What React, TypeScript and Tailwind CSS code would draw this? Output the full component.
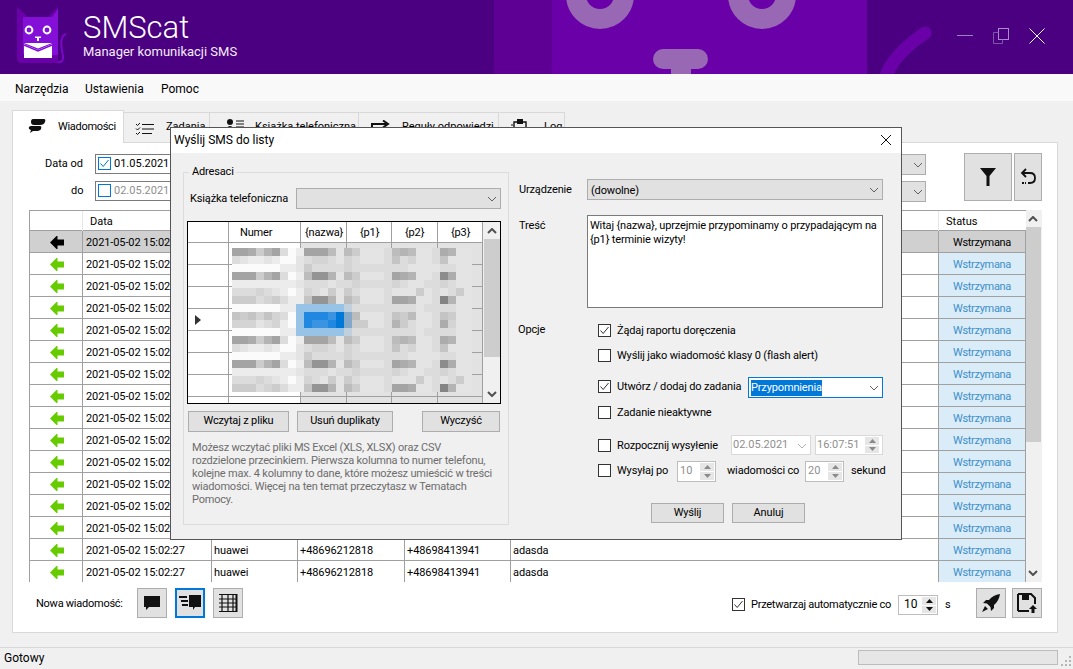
import React from "react";

const T = ({ c, children }: { c: string; children: React.ReactNode }) => (
  <div className={"absolute h-[16px] leading-[16px] whitespace-nowrap " + c}>{children}</div>
);

const Chevron = ({ c = "", color = "#606060" }: { c?: string; color?: string }) => (
  <svg viewBox="0 0 10 6" className={"absolute w-[10px] h-[6px] " + c}>
    <path d="M1 1 L5 5 L9 1" fill="none" stroke={color} strokeWidth="1" />
  </svg>
);
const ChevronBold = ({ c = "", up = false }: { c?: string; up?: boolean }) => (
  <svg viewBox="0 0 10 6" className={"absolute w-[10px] h-[6px] " + c}>
    <path d={up ? "M1 5 L5 1 L9 5" : "M1 1 L5 5 L9 1"} fill="none" stroke="#505050" strokeWidth="2" />
  </svg>
);

const Check = ({ c, on = false, blue = false }: { c: string; on?: boolean; blue?: boolean }) => (
  <div className={"absolute w-[13px] h-[13px] border bg-white " + (blue ? "border-[#0078d7] " : "border-[#333333] ") + c}>
    {on && (
      <svg viewBox="0 0 11 11" className="absolute left-0 top-0 w-[11px] h-[11px]">
        <path d="M1.5 5.5 L4.2 8.5 L9.5 2" fill="none" stroke={blue ? "#0078d7" : "#333333"} strokeWidth="1" />
      </svg>
    )}
  </div>
);

const Spin = ({ c, dark = false }: { c: string; dark?: boolean }) => (
  <div className={"absolute w-[14px] flex flex-col gap-[1px] " + c}>
    <div className="flex-1 bg-[#e6e6e6] flex items-center justify-center">
      <svg viewBox="0 0 7 4" className="w-[7px] h-[4px]"><path d="M0 4 L3.5 0 L7 4Z" fill={dark ? "#111111" : "#8a8a8a"} /></svg>
    </div>
    <div className="flex-1 bg-[#e6e6e6] flex items-center justify-center">
      <svg viewBox="0 0 7 4" className="w-[7px] h-[4px]"><path d="M0 0 L3.5 4 L7 0Z" fill={dark ? "#111111" : "#8a8a8a"} /></svg>
    </div>
  </div>
);

const Btn = ({ c, children }: { c: string; children?: React.ReactNode }) => (
  <div className={"absolute bg-[#e1e1e1] border border-[#adadad] flex items-center justify-center text-black " + c}>{children}</div>
);

const Arrow = ({ color }: { color: string }) => (
  <svg viewBox="0 0 14 13" className="w-[14px] h-[13px]">
    <path d="M0 6.5 L6.5 0 L7.5 0 L7.5 3.5 L14 3.5 L14 9.5 L7.5 9.5 L7.5 13 L6.5 13 Z" fill={color} />
  </svg>
);

const Logo = () => (
  <svg viewBox="0 0 70 70" className="absolute left-0 top-0 w-[70px] h-[70px]">
    <path d="M17 7 L28 17 L48 17 L58 7 L58 63 L22 63 Q17 63 17 58 Z" fill="#6a00a8" />
    <path d="M23 17 L52 17 L58 9 L58 55 L26 55 Q23 55 23 52 Z" fill="#8410d8" />
    <path d="M58 62 Q64 63 63 56 C62 50 60 44 62 38 Q63 35 66 34" fill="none" stroke="#7a08c4" strokeWidth="2" />
    <circle cx="29" cy="30" r="3.4" fill="none" stroke="#ffffff" strokeWidth="2" />
    <circle cx="47" cy="30" r="3.4" fill="none" stroke="#ffffff" strokeWidth="2" />
    <path d="M35 36.5 H41 V38 H39 V41 H37 V38 H35 Z" fill="#ffffff" />
    <path d="M24 44 L38 50 L52 44 V58 H24 Z" fill="#ffffff" />
    <path d="M24 43 H52 L38 48.5 Z" fill="#ffffff" />
    <path d="M24 45 L38 51 L52 45" fill="none" stroke="#8410d8" strokeWidth="1.5" />
  </svg>
);

const Bubble = ({ c }: { c: string }) => (
  <svg viewBox="0 0 18 18" className={"w-[18px] h-[18px] " + c}>
    <path d="M1 2 H17 V13 H6 L3 16 V13 H1 Z" fill="#111111" />
  </svg>
);

/* ---------- blurred contact mosaic ---------- */
const MOSAIC = [
  "556a75cfe5558d8adddc878ddc67dd",
  "cdeedeffdcbbcdbcdddc9cbddc9ddd",
  "ffffffeedaccccbcccccccddddccdd",
  "555a75cfe8337d8adddc567ddc26dd",
  "eeeeeeeedcccdccbccccbcddccbcdd",
  "cccbcdefebcdadacdddcdddadcdcad",
  "aaacbacee9337d8adddc556ddc17dd",
  "ffffffeeLLLLLLMccccccccdccccdd",
  "9a9b9bcfLTTTSUV8dddc9a8ddc9add",
  "bbbdcbefLTSSTUVaaddc7acddc6bdd",
  "ffffffeeLLLLLLMccccccccdccccdd",
];
const SPECIAL: Record<string, string> = {
  L: "#97c3e6",
  M: "#c0d0dc",
  S: "#3a94e2",
  T: "#2088e0",
  U: "#0078d7",
  V: "#84a8c8",
};
const cellColor = (ch: string) => {
  if (SPECIAL[ch]) return SPECIAL[ch];
  if (ch === "f") return "#fbfbfb";
  const g = 0x7c + 8 * parseInt(ch, 16);
  return `rgb(${g},${g},${g})`;
};
const Mosaic = () => {
  const rects: React.ReactNode[] = [];
  for (let r = 0; r < 18; r++) {
    const row = MOSAIC[r % 11];
    for (let i = 0; i < 30; i++) {
      rects.push(<rect key={r + "-" + i} x={i * 8} y={r * 8} width="8" height="8" fill={cellColor(row[i])} />);
    }
  }
  return (
    <svg viewBox="0 0 240 144" shapeRendering="crispEdges" className="absolute left-[232px] top-[248px] w-[240px] h-[144px]">
      {rects}
    </svg>
  );
};

const Dialog = () => {
  const hLines = ["top-[242px]", "top-[264px]", "top-[286px]", "top-[308px]", "top-[330px]", "top-[352px]", "top-[374px]", "top-[396px]"];
  const vLines = ["left-[228px]", "left-[300px]", "left-[346px]", "left-[391px]", "left-[437px]", "left-[482px]"];
  return (
    <div className="text-[11px] tracking-[-0.15px]">
      <div className="absolute left-[170px] top-[127px] w-[732px] h-[413px] bg-[#f0f0f0] border border-[#555555]" />
      <div className="absolute left-[171px] top-[128px] w-[730px] h-[25px] bg-white" />
      <T c="left-[174px] top-[132px] text-[12px] tracking-[0px]">Wyślij SMS do listy</T>
      <svg viewBox="0 0 12 12" className="absolute left-[880px] top-[134px] w-[12px] h-[12px]">
        <path d="M1 1 L11 11 M11 1 L1 11" stroke="#111111" strokeWidth="1" />
      </svg>

      {/* Adresaci */}
      <div className="absolute left-[183px] top-[172px] w-[326px] h-[353px] border border-[#dcdcdc]" />
      <div className="absolute left-[189px] top-[165px] w-[47px] h-[14px] bg-[#f0f0f0]" />
      <T c="left-[192px] top-[164px]">Adresaci</T>
      <T c="left-[190px] top-[191px]">Książka telefoniczna</T>
      <div className="absolute left-[296px] top-[188px] w-[205px] h-[21px] bg-[#e1e1e1] border border-[#adadad]" />
      <Chevron c="left-[487px] top-[196px]" />

      {/* contact grid */}
      <div className="absolute left-[187px] top-[221px] w-[314px] h-[183px] bg-white border border-black overflow-hidden" />
      <div className="absolute left-[301px] top-[243px] w-[181px] h-[160px] bg-[#e2e2e2]" />
      {hLines.map((h) => (
        <div key={h} className={"absolute left-[188px] w-[294px] h-[1px] bg-[#a0a0a0] " + h} />
      ))}
      {vLines.map((v) => (
        <div key={v} className={"absolute top-[222px] w-[1px] h-[181px] bg-[#a0a0a0] " + v} />
      ))}
      <Mosaic />
      <T c="left-[240px] top-[225px]">Numer</T>
      <T c="left-[305px] top-[225px]">{"{nazwa}"}</T>
      <T c="left-[360px] top-[225px]">{"{p1}"}</T>
      <T c="left-[405px] top-[225px]">{"{p2}"}</T>
      <T c="left-[451px] top-[225px]">{"{p3}"}</T>
      <svg viewBox="0 0 6 10" className="absolute left-[195px] top-[315px] w-[6px] h-[10px]">
        <path d="M0 0 L6 5 L0 10Z" fill="#333333" />
      </svg>
      <div className="absolute left-[483px] top-[222px] w-[17px] h-[181px] bg-[#f0f0f0]" />
      <div className="absolute left-[484px] top-[239px] w-[16px] h-[118px] bg-[#cdcdcd]" />
      <ChevronBold up c="left-[487px] top-[228px]" />
      <ChevronBold c="left-[487px] top-[391px]" />

      <Btn c="left-[188px] top-[411px] w-[101px] h-[21px]">Wczytaj z pliku</Btn>
      <Btn c="left-[297px] top-[411px] w-[96px] h-[21px]">Usuń duplikaty</Btn>
      <Btn c="left-[422px] top-[411px] w-[78px] h-[21px]">Wyczyść</Btn>

      <div className="absolute left-[192px] top-[441px] w-[310px] leading-[13px] text-[#6d6d6d] whitespace-nowrap tracking-[-0.2px]">
        <div>Możesz wczytać pliki MS Excel (XLS, XLSX) oraz CSV</div>
        <div>rozdzielone przecinkiem. Pierwsza kolumna to numer telefonu,</div>
        <div>kolejne max. 4 kolumny to dane, które możesz umieścić w treści</div>
        <div>wiadomości. Więcej na ten temat przeczytasz w Tematach</div>
        <div>Pomocy.</div>
      </div>

      {/* right column */}
      <T c="left-[519px] top-[182px]">Urządzenie</T>
      <div className="absolute left-[587px] top-[179px] w-[296px] h-[21px] bg-[#e1e1e1] border border-[#adadad]" />
      <T c="left-[591px] top-[183px]">(dowolne)</T>
      <Chevron c="left-[869px] top-[187px]" />
      <T c="left-[519px] top-[218px]">Treść</T>
      <div className="absolute left-[587px] top-[215px] w-[296px] h-[93px] bg-white border border-[#7a7a7a]" />
      <div className="absolute left-[590px] top-[219px] leading-[14px] whitespace-nowrap">
        <div>Witaj {"{nazwa}"}, uprzejmie przypominamy o przypadającym na</div>
        <div>{"{p1}"} terminie wizyty!</div>
      </div>

      <T c="left-[518px] top-[322px]">Opcje</T>
      <Check c="left-[598px] top-[324px]" on />
      <T c="left-[617px] top-[323px]">Żądaj raportu doręczenia</T>
      <Check c="left-[598px] top-[349px]" />
      <T c="left-[617px] top-[348px]">Wyślij jako wiadomość klasy 0 (flash alert)</T>
      <Check c="left-[598px] top-[380px]" on />
      <T c="left-[617px] top-[379px]">Utwórz / dodaj do zadania</T>
      <div className="absolute left-[748px] top-[377px] w-[135px] h-[21px] bg-white border border-[#0078d7]" />
      <T c="left-[751px] top-[380px] bg-[#0078d7] text-white">Przypomnienia</T>
      <Chevron c="left-[869px] top-[385px]" />
      <Check c="left-[598px] top-[406px]" />
      <T c="left-[617px] top-[405px]">Zadanie nieaktywne</T>

      <Check c="left-[598px] top-[439px]" />
      <T c="left-[617px] top-[438px]">Rozpocznij wysyłenie</T>
      <div className="absolute left-[731px] top-[435px] w-[80px] h-[20px] bg-white border border-[#d9d9d9]" />
      <T c="left-[733px] top-[437px] text-[#8f8f8f] tracking-[0px]">02.05.2021</T>
      <Chevron c="left-[797px] top-[443px]" color="#b0b0b0" />
      <div className="absolute left-[815px] top-[435px] w-[68px] h-[20px] bg-white border border-[#d9d9d9]" />
      <T c="left-[817px] top-[437px] text-[#8f8f8f] tracking-[0px]">16:07:51</T>
      <Spin c="left-[865px] top-[437px] h-[16px]" />

      <Check c="left-[598px] top-[464px]" />
      <T c="left-[617px] top-[463px]">Wysyłaj po</T>
      <div className="absolute left-[677px] top-[461px] w-[39px] h-[21px] bg-white border border-[#bdbdbd]" />
      <T c="left-[680px] top-[463px] text-[#8f8f8f] tracking-[0px]">10</T>
      <Spin c="left-[700px] top-[463px] h-[17px]" />
      <T c="left-[727px] top-[463px]">wiadomości co</T>
      <div className="absolute left-[805px] top-[461px] w-[39px] h-[21px] bg-white border border-[#bdbdbd]" />
      <T c="left-[808px] top-[463px] text-[#8f8f8f] tracking-[0px]">20</T>
      <Spin c="left-[828px] top-[463px] h-[17px]" />
      <T c="left-[851px] top-[463px]">sekund</T>

      <Btn c="left-[651px] top-[503px] w-[73px] h-[20px]">Wyślij</Btn>
      <Btn c="left-[732px] top-[503px] w-[73px] h-[20px]">Anuluj</Btn>
    </div>
  );
};

const ROWS = Array.from({ length: 16 }, (_, i) => i);
const COLS = "grid grid-cols-[53px_129px_86px_107px_106px_428px_87px]";

const Table = () => (
  <div className="absolute left-[29px] top-[210px] w-[997px] h-[372px] overflow-hidden border-l border-t border-[#a0a0a0] text-[11px]">
    <div className={COLS + " h-[20px] bg-white border-b border-[#a0a0a0]"}>
      <div className="border-r border-[#e6e6e6]" />
      <div className="pl-[7px] leading-[22px] border-r border-[#e6e6e6]">Data</div>
      <div className="border-r border-[#e6e6e6]" />
      <div className="border-r border-[#e6e6e6]" />
      <div className="border-r border-[#e6e6e6]" />
      <div className="border-r border-[#e6e6e6]" />
      <div className="pl-[7px] leading-[22px]">Status</div>
    </div>
    {ROWS.map((i) => {
      const sel = i === 0;
      const cell = "h-[22px] leading-[23px] border-b border-r border-[#a0a0a0] pl-[2px] whitespace-nowrap overflow-hidden tracking-[-0.1px] " + (sel ? "bg-[#d0d0d0]" : "bg-white");
      return (
        <div key={i} className={COLS}>
          <div className={cell + " flex items-center justify-center pl-0 pt-[1px]"}>
            <Arrow color={sel ? "#000000" : "#66cc00"} />
          </div>
          <div className={cell + " pl-[3px]"}>2021-05-02 15:02:27</div>
          <div className={cell}>huawei</div>
          <div className={cell}>+48696212818</div>
          <div className={cell}>+48698413941</div>
          <div className={cell}>adasda</div>
          <div className={"h-[22px] leading-[23px] border-b border-r border-[#a0a0a0] text-center tracking-[-0.3px] " + (sel ? "bg-[#d0d0d0] text-black" : "bg-[#d9ecf7] text-[#3f8fcb]")}>Wstrzymana</div>
        </div>
      );
    })}
  </div>
);

const Tab = ({ c, children }: { c: string; children?: React.ReactNode }) => (
  <div className={"absolute bg-[#f0f0f0] border border-[#d9d9d9] " + c}>{children}</div>
);

export default function App() {
  return (
    <div className="relative w-[1073px] h-[669px] overflow-hidden bg-[#f0f0f0] text-black [font-family:Roboto,sans-serif] text-[11px]">
      {/* header */}
      <div className="absolute left-0 top-0 w-[1073px] h-[74px] bg-[#4b0082] overflow-hidden">
        <div className="absolute left-[494px] top-0 w-[373px] h-[74px] bg-[#5e0094]" />
        <div className="absolute left-[552px] top-0 w-[315px] h-[74px] bg-[#6a00a8]" />
        <svg viewBox="0 0 1073 74" className="absolute left-0 top-0 w-[1073px] h-[74px]">
          <circle cx="600" cy="-5" r="24" fill="none" stroke="#9868b4" strokeWidth="20" />
          <circle cx="762" cy="-5" r="24" fill="none" stroke="#9868b4" strokeWidth="20" />
          <rect x="653" y="49" width="55" height="20" rx="10" fill="#9868b4" />
          <rect x="671" y="66" width="20" height="8" fill="#9868b4" />
          <path d="M886 76 Q893 55 925 33" fill="none" stroke="#6a00a8" strokeWidth="13" strokeLinecap="round" />
        </svg>
        <Logo />
        <div className="absolute left-[83px] top-[6px] text-[31px] leading-[44px] font-light text-white whitespace-nowrap [font-family:'Open_Sans',sans-serif]">SMScat</div>
        <div className="absolute left-[83px] top-[43px] text-[13px] leading-[18px] text-[#f4ecfa] whitespace-nowrap [font-family:'Open_Sans',sans-serif]">Manager komunikacji SMS</div>
        <div className="absolute left-[957px] top-[35px] w-[16px] h-[1px] bg-[#9f7fbf]" />
        <svg viewBox="0 0 18 18" className="absolute left-[992px] top-[27px] w-[18px] h-[18px]">
          <rect x="6.5" y="1.5" width="10" height="11" fill="none" stroke="#a88bc8" />
          <path d="M6.5 5.5 H1.5 V16.5 H10.5 V12.5" fill="none" stroke="#7f55a8" />
        </svg>
        <svg viewBox="0 0 16 16" className="absolute left-[1029px] top-[28px] w-[16px] h-[16px]">
          <path d="M0.5 0.5 L15.5 15.5 M15.5 0.5 L0.5 15.5" stroke="#ffffff" strokeWidth="1" />
        </svg>
      </div>

      {/* menu */}
      <div className="absolute left-0 top-[74px] w-[1073px] h-[27px] bg-[#f9f9f9]" />
      <T c="left-[15px] top-[81px] text-[12px]">Narzędzia</T>
      <T c="left-[85px] top-[81px] text-[12px]">Ustawienia</T>
      <T c="left-[161px] top-[81px] text-[12px]">Pomoc</T>

      {/* tabs */}
      <div className="absolute left-[12px] top-[142px] w-[1046px] h-[491px] bg-white border border-[#d9d9d9]" />
      <Tab c="left-[123px] top-[112px] w-[87px] h-[31px]" />
      <Tab c="left-[209px] top-[112px] w-[150px] h-[31px]" />
      <Tab c="left-[358px] top-[112px] w-[141px] h-[31px]" />
      <Tab c="left-[498px] top-[112px] w-[67px] h-[31px]" />
      <div className="absolute left-[12px] top-[110px] w-[112px] h-[33px] bg-white border border-b-0 border-[#d9d9d9]" />
      <svg viewBox="0 0 18 16" className="absolute left-[28px] top-[118px] w-[18px] h-[16px]">
        <path d="M5 1 H16 Q18 1 17 4 Q16 7 12 7 H6 Q3 7 3 4 Q3 1 5 1Z M3 8 H12 Q14 8 13 11 Q12 13 8 13 H5 L2 15 L3 12 Q0 11 1 9 Q2 8 3 8Z" fill="#111111" />
      </svg>
      <T c="left-[58px] top-[119px] tracking-[-0.3px]">Wiadomości</T>
      <svg viewBox="0 0 20 14" className="absolute left-[135px] top-[122px] w-[20px] h-[14px]">
        <path d="M7 2.5 H19 M7 7 H19 M7 11.5 H17" stroke="#111111" strokeWidth="1.2" />
        <path d="M1 2 L2.5 3.5 L5 1 M1 6.5 L2.5 8 L5 5.5 M1 11 L2.5 12.5 L5 10" fill="none" stroke="#111111" strokeWidth="1" />
      </svg>
      <T c="left-[166px] top-[119px]">Zadania</T>
      <svg viewBox="0 0 18 16" className="absolute left-[226px] top-[119px] w-[18px] h-[16px]">
        <circle cx="4" cy="3" r="3" fill="#111111" />
        <path d="M0 14 Q0 7 4 7 Q8 7 8 14Z" fill="#111111" />
        <path d="M10 2 H18 M10 5 H18 M10 8 H18" stroke="#111111" strokeWidth="1.2" />
      </svg>
      <T c="left-[255px] top-[119px]">Książka telefoniczna</T>
      <svg viewBox="0 0 20 14" className="absolute left-[371px] top-[120px] w-[20px] h-[14px]">
        <path d="M1 13 V4 H16 M12 0.5 L17 4 L12 7.5 M1 13 H16" fill="none" stroke="#111111" strokeWidth="2" />
      </svg>
      <T c="left-[402px] top-[119px]">Reguły odpowiedzi</T>
      <svg viewBox="0 0 18 16" className="absolute left-[511px] top-[119px] w-[18px] h-[16px]">
        <path d="M3 3 H15 V16 H3 Z" fill="none" stroke="#111111" strokeWidth="1.4" />
        <rect x="6" y="0" width="6" height="5" fill="#111111" />
        <path d="M0 6 H2 M0 9 H2" stroke="#111111" strokeWidth="1" />
      </svg>
      <T c="left-[544px] top-[119px]">Log</T>

      {/* filters */}
      <T c="left-[45px] top-[156px]">Data od</T>
      <div className="absolute left-[95px] top-[154px] w-[130px] h-[20px] bg-white border border-[#7a7a7a]" />
      <Check c="left-[98px] top-[157px]" on blue />
      <T c="left-[114px] top-[156px]">01.05.2021</T>
      <T c="left-[71px] top-[183px]">do</T>
      <div className="absolute left-[95px] top-[181px] w-[130px] h-[20px] bg-white border border-[#7a7a7a]" />
      <Check c="left-[98px] top-[184px]" blue />
      <T c="left-[114px] top-[183px] text-[#8f8f8f]">02.05.2021</T>
      <div className="absolute left-[800px] top-[154px] w-[126px] h-[21px] bg-[#e1e1e1] border border-[#adadad]" />
      <Chevron c="left-[913px] top-[162px]" />
      <div className="absolute left-[800px] top-[181px] w-[126px] h-[21px] bg-[#e1e1e1] border border-[#adadad]" />
      <Chevron c="left-[913px] top-[189px]" />
      <Btn c="left-[964px] top-[153px] w-[48px] h-[48px]">
        <svg viewBox="0 0 16 18" className="w-[16px] h-[18px]"><path d="M0 0 H16 L9.5 8 V18 H6.5 V8 Z" fill="#111111" /></svg>
      </Btn>
      <Btn c="left-[1014px] top-[153px] w-[28px] h-[48px]">
        <svg viewBox="0 0 16 18" className="w-[16px] h-[18px]">
          <path d="M6 1 L2 5 L6 9" fill="none" stroke="#111111" strokeWidth="1.8" />
          <path d="M2 5 H10 Q15 5 15 10 Q15 15 10 15 H8" fill="none" stroke="#111111" strokeWidth="1.8" />
          <path d="M2 15 H4 M5 15 H6" stroke="#111111" strokeWidth="1.8" />
        </svg>
      </Btn>

      {/* table */}
      <Table />
      <div className="absolute left-[1026px] top-[210px] w-[16px] h-[372px] bg-[#f0f0f0]" />
      <div className="absolute left-[1026px] top-[227px] w-[15px] h-[215px] bg-[#cdcdcd]" />
      <ChevronBold up c="left-[1028px] top-[216px]" />
      <ChevronBold c="left-[1028px] top-[570px]" />

      {/* bottom left */}
      <T c="left-[36px] top-[596px] tracking-[-0.25px]">Nowa wiadomość:</T>
      <Btn c="left-[137px] top-[588px] w-[30px] h-[30px]"><Bubble c="" /></Btn>
      <div className="absolute left-[175px] top-[588px] w-[30px] h-[30px] bg-[#e1e1e1] border-2 border-[#0078d7] flex items-center justify-center">
        <svg viewBox="0 0 24 18" className="w-[24px] h-[18px]">
          <path d="M11 1 H23 V13 H17 L15 16 V13 H11 Z" fill="#111111" />
          <path d="M1 3 H9 M3 7 H10 M4 11 H10" stroke="#111111" strokeWidth="2" />
        </svg>
      </div>
      <Btn c="left-[213px] top-[588px] w-[30px] h-[30px]">
        <svg viewBox="0 0 20 20" className="w-[20px] h-[20px]">
          <path d="M1 1.5 H19 M1 6 H19 M1 10 H19 M1 14 H19 M1 18.5 H19 M4 1 V19 M10 1 V19 M15 1 V19" fill="none" stroke="#111111" strokeWidth="1.2" />
          <path d="M18.5 1 V19" stroke="#111111" strokeWidth="2" />
        </svg>
      </Btn>

      {/* bottom right */}
      <Check c="left-[732px] top-[598px]" on />
      <T c="left-[751px] top-[597px] tracking-[-0.25px]">Przetwarzaj automatycznie co</T>
      <div className="absolute left-[898px] top-[595px] w-[40px] h-[20px] bg-white border border-[#bdbdbd]" />
      <T c="left-[904px] top-[596px] text-[12px]">10</T>
      <Spin dark c="left-[922px] top-[597px] h-[16px]" />
      <T c="left-[945px] top-[597px]">s</T>
      <Btn c="left-[976px] top-[588px] w-[30px] h-[30px]">
        <svg viewBox="0 0 20 20" className="w-[20px] h-[20px]">
          <path d="M19 1 Q12 2 8 7 L5 7 L2 10 L6 10.5 L9.5 14 L10 18 L13 15 L13 12 Q18 8 19 1Z M4 13 L1 19 L7 16Z" fill="#111111" />
        </svg>
      </Btn>
      <Btn c="left-[1012px] top-[588px] w-[30px] h-[30px]">
        <svg viewBox="0 0 22 22" className="w-[22px] h-[22px]">
          <path d="M2 2 H15 L19 6 V12 M13 19 H2 Z M2 2 V19" fill="none" stroke="#111111" strokeWidth="2" />
          <rect x="6" y="2" width="7" height="6" fill="#111111" />
          <path d="M17 13 L21 17 H18.5 V21 H15.5 V17 H13 Z" fill="#111111" />
        </svg>
      </Btn>

      {/* status bar */}
      <div className="absolute left-0 top-[647px] w-[1073px] h-[1px] bg-[#d9d9d9]" />
      <T c="left-[4px] top-[650px] text-[12px]">Gotowy</T>
      <div className="absolute left-[858px] top-[650px] w-[200px] h-[15px] bg-[#e6e6e6] border border-[#bcbcbc]" />
      <svg viewBox="0 0 12 12" className="absolute left-[1060px] top-[655px] w-[12px] h-[12px]">
        <path d="M9 1h2v2h-2z M5 5h2v2h-2z M9 5h2v2h-2z M1 9h2v2h-2z M5 9h2v2h-2z M9 9h2v2h-2z" fill="#b5b5b5" />
      </svg>

      <Dialog />
    </div>
  );
}
